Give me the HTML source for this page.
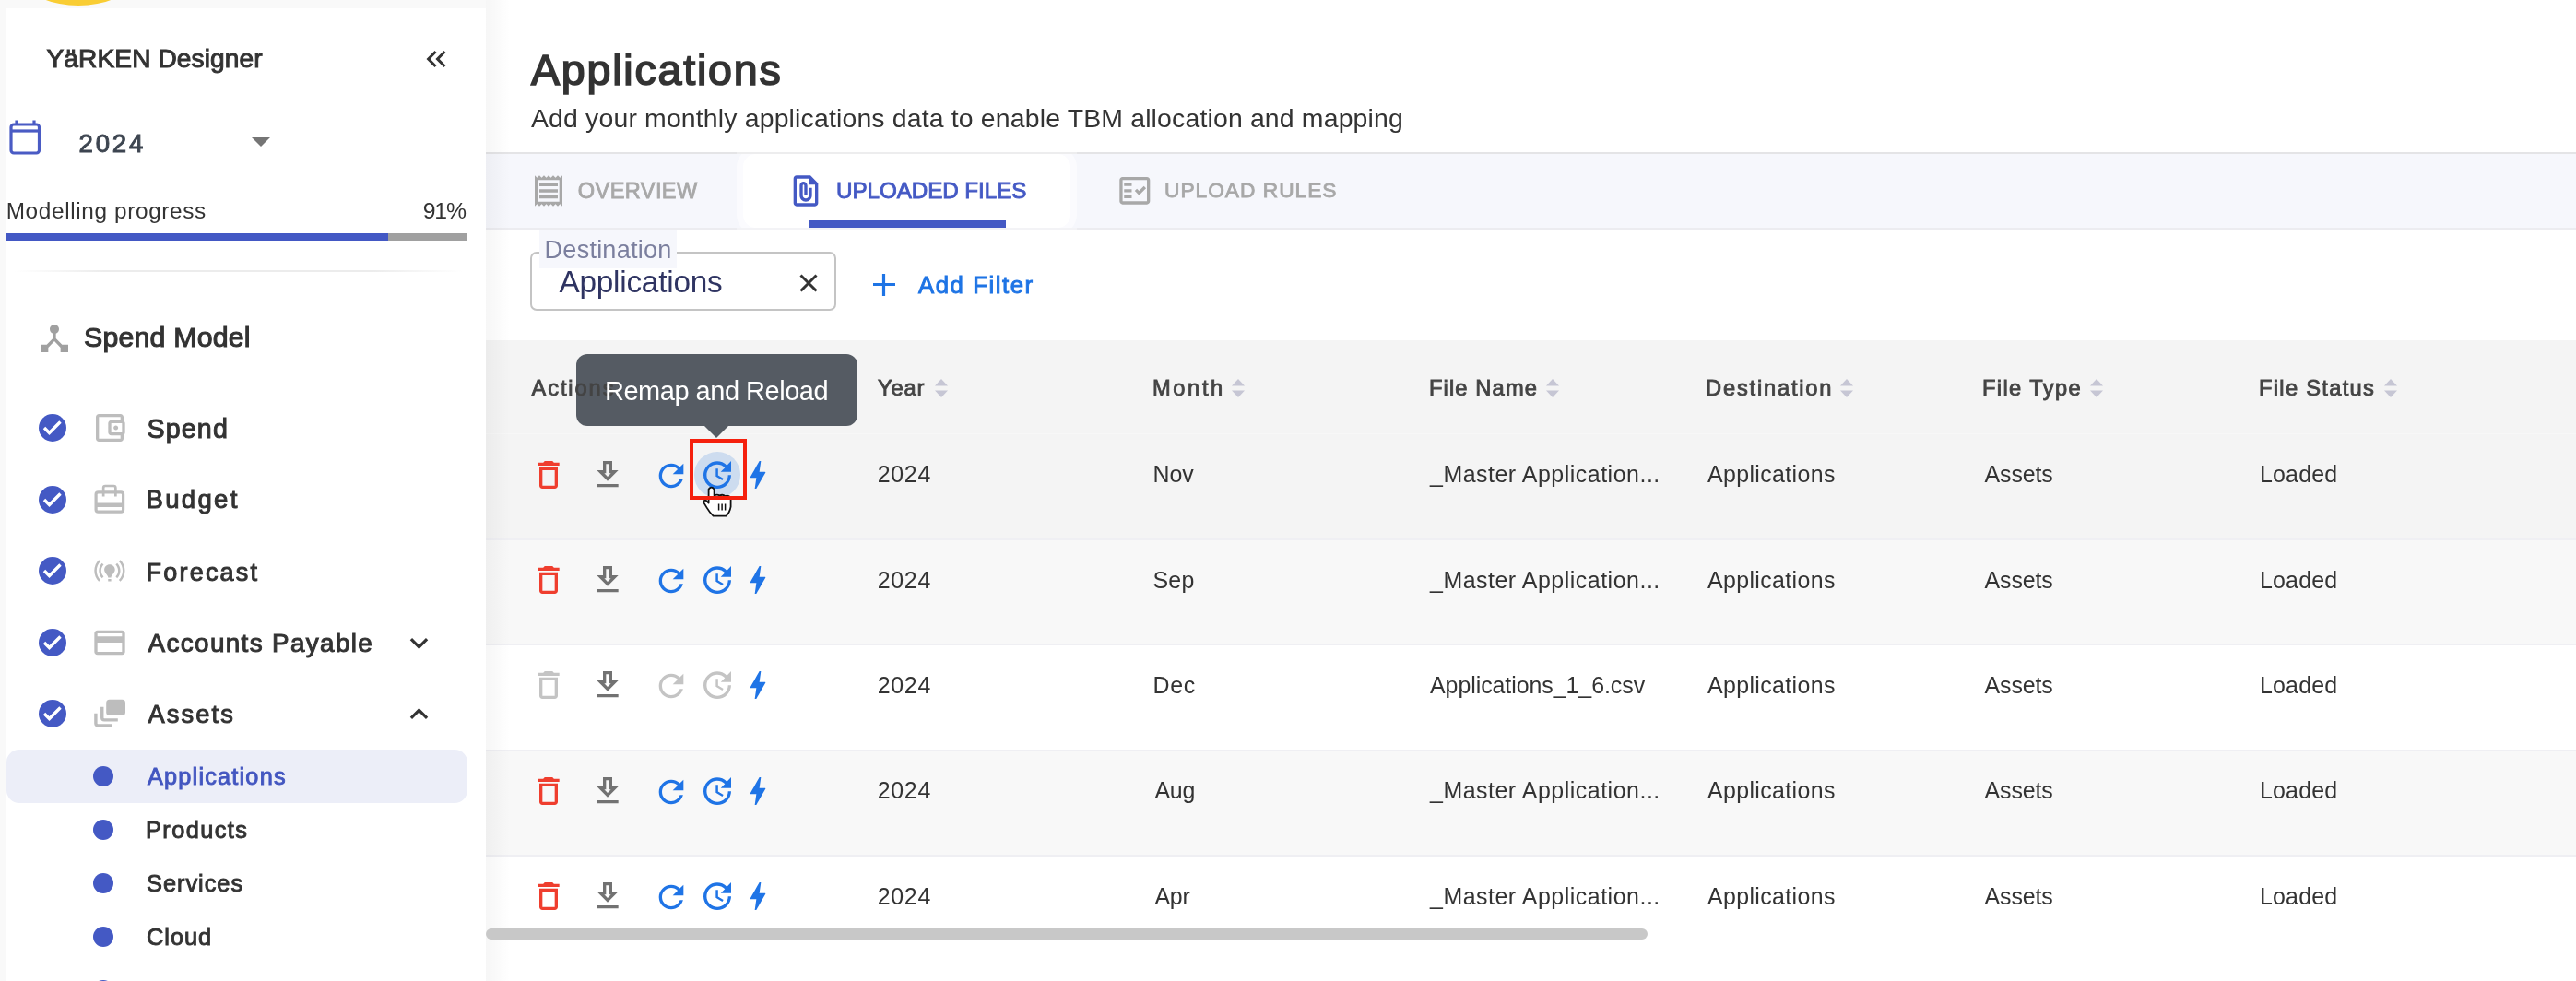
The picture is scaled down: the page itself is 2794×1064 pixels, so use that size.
<!DOCTYPE html>
<html><head><meta charset="utf-8"><title>Applications</title>
<style>
html,body{margin:0;padding:0;}
body{width:2794px;height:1064px;overflow:hidden;position:relative;background:#f9f9f9;font-family:"Liberation Sans",sans-serif;}
.t{position:absolute;white-space:nowrap;line-height:1;}
.b{position:absolute;}
</style></head><body><div id="root" style="position:absolute;left:0;top:0;width:2794px;height:1064px;will-change:transform">
<div class="b" style="left:-20px;top:-200px;width:210px;height:206px;border-radius:50%;background:#f9cd34"></div>
<div class="b" style="left:7px;top:9px;width:520px;height:1100px;background:#fff;"></div>
<div class="b" style="left:527px;top:0px;width:2267px;height:1064px;background:#fff;"></div>
<div class="t" style="left:50.50px;top:50.00px;font-size:28.1px;font-weight:400;color:#333;letter-spacing:0.107px;-webkit-text-stroke:1.01px #333;">YäRKEN Designer</div>
<svg class="b" style="left:455.30px;top:45.80px;" width="36.00" height="36.00" viewBox="0 0 24 24"><path d="M17.59 18L19 16.59 14.42 12 19 7.41 17.59 6l-6 6zM11 18l1.41-1.41L7.83 12l4.58-4.59L11 6l-6 6z" fill="#333" /></svg>
<svg class="b" style="left:9px;top:129px;" width="37" height="40" viewBox="0 0 37 40"><rect x="3" y="6" width="30.5" height="31" rx="3" fill="none" stroke="#4a5bc4" stroke-width="3.2"/><line x1="3" y1="13" x2="33.5" y2="13" stroke="#4a5bc4" stroke-width="3.2"/><line x1="9" y1="1.5" x2="9" y2="6" stroke="#4a5bc4" stroke-width="3.2"/><line x1="28" y1="1.5" x2="28" y2="6" stroke="#4a5bc4" stroke-width="3.2"/></svg>
<div class="t" style="left:85.60px;top:142.00px;font-size:27.55px;font-weight:400;color:#3d4550;letter-spacing:2.800px;-webkit-text-stroke:0.99px #3d4550;">2024</div>
<svg class="b" style="left:272px;top:148px;" width="22" height="12" viewBox="0 0 22 12"><path d="M1 1 L21 1 L11 11 Z" fill="#757575"/></svg>
<div class="t" style="left:6.70px;top:217.00px;font-size:24.35px;font-weight:400;color:#333;letter-spacing:0.641px;">Modelling progress</div>
<div class="t" style="left:458.80px;top:217.00px;font-size:24.78px;font-weight:400;color:#333;letter-spacing:-1.200px;">91%</div>
<div class="b" style="left:7px;top:253px;width:500px;height:8px;background:#a0a0a0;"></div>
<div class="b" style="left:7px;top:253px;width:414px;height:8px;background:#4358c4;"></div>
<div class="b" style="left:16px;top:293px;width:486px;height:2px;background:linear-gradient(90deg,rgba(235,235,235,0),#ececec 20%,#ececec 80%,rgba(235,235,235,0));"></div>
<svg class="b" style="left:39.00px;top:346.50px;" width="40.01" height="40.01" viewBox="0 0 24 24"><path d="M17 16l-4-4V8.82C14.16 8.4 15 7.3 15 6c0-1.66-1.34-3-3-3S9 4.34 9 6c0 1.3.84 2.4 2 2.82V12l-4 4H3v5h5v-3.05l4-4.2 4 4.2V21h5v-5h-4z" fill="#a0a0a0" /></svg>
<div class="t" style="left:91.00px;top:351.00px;font-size:30.3px;font-weight:400;color:#333;letter-spacing:0.200px;-webkit-text-stroke:1.09px #333;">Spend Model</div>
<svg class="b" style="left:42px;top:449px;" width="30" height="30" viewBox="0 0 30 30"><circle cx="15" cy="15" r="15" fill="#4459c4"/><path d="M6 15 L11.5 20.5 L23.5 8.5" fill="none" stroke="#fff" stroke-width="3.4"/></svg>
<div class="t" style="left:159.60px;top:451.00px;font-size:28.65px;font-weight:400;color:#333;letter-spacing:1.100px;-webkit-text-stroke:1.03px #333;">Spend</div>
<svg class="b" style="left:42px;top:527px;" width="30" height="30" viewBox="0 0 30 30"><circle cx="15" cy="15" r="15" fill="#4459c4"/><path d="M6 15 L11.5 20.5 L23.5 8.5" fill="none" stroke="#fff" stroke-width="3.4"/></svg>
<div class="t" style="left:158.60px;top:528.00px;font-size:27.55px;font-weight:400;color:#333;letter-spacing:2.280px;-webkit-text-stroke:0.99px #333;">Budget</div>
<svg class="b" style="left:42px;top:604px;" width="30" height="30" viewBox="0 0 30 30"><circle cx="15" cy="15" r="15" fill="#4459c4"/><path d="M6 15 L11.5 20.5 L23.5 8.5" fill="none" stroke="#fff" stroke-width="3.4"/></svg>
<div class="t" style="left:158.60px;top:608.00px;font-size:27.0px;font-weight:400;color:#333;letter-spacing:2.200px;-webkit-text-stroke:0.97px #333;">Forecast</div>
<svg class="b" style="left:42px;top:682px;" width="30" height="30" viewBox="0 0 30 30"><circle cx="15" cy="15" r="15" fill="#4459c4"/><path d="M6 15 L11.5 20.5 L23.5 8.5" fill="none" stroke="#fff" stroke-width="3.4"/></svg>
<div class="t" style="left:160.60px;top:684.00px;font-size:27.82px;font-weight:400;color:#333;letter-spacing:1.373px;-webkit-text-stroke:1.0px #333;">Accounts Payable</div>
<svg class="b" style="left:42px;top:759px;" width="30" height="30" viewBox="0 0 30 30"><circle cx="15" cy="15" r="15" fill="#4459c4"/><path d="M6 15 L11.5 20.5 L23.5 8.5" fill="none" stroke="#fff" stroke-width="3.4"/></svg>
<div class="t" style="left:160.60px;top:761.00px;font-size:27.27px;font-weight:400;color:#333;letter-spacing:2.080px;-webkit-text-stroke:0.98px #333;">Assets</div>
<svg class="b" style="left:99.00px;top:444.00px;" width="40.01" height="40.01" viewBox="0 0 24 24"><path d="M21 7.28V5c0-1.1-.9-2-2-2H5c-1.11 0-2 .9-2 2v14c0 1.1.89 2 2 2h14c1.1 0 2-.9 2-2v-2.28c.59-.35 1-.98 1-1.72V9c0-.74-.41-1.37-1-1.72zM20 9v6h-7V9h7zM5 19V5h14v2h-6c-1.1 0-2 .9-2 2v6c0 1.1.9 2 2 2h6v2H5zM16 13.5c.83 0 1.5-.67 1.5-1.5s-.67-1.5-1.5-1.5-1.5.67-1.5 1.5.67 1.5 1.5 1.5z" fill="#bdbdbd" /></svg>
<svg class="b" style="left:98px;top:520px;" width="42" height="42" viewBox="0 0 42 42"><rect x="6.1" y="13.8" width="29.5" height="21.4" rx="2.5" fill="none" stroke="#bdbdbd" stroke-width="3.2"/><path d="M14.15 18.6 V9 Q14.15 7 16.15 7 H25.35 Q27.35 7 27.35 9 V18.6" fill="none" stroke="#bdbdbd" stroke-width="2.7"/><rect x="6" y="25.5" width="29.5" height="4.5" fill="#bdbdbd"/></svg>
<svg class="b" style="left:99.00px;top:599.30px;" width="39.84" height="39.84" viewBox="0 0 24 24"><path d="M15.5 11.5c0 2-2.5 3.5-2.5 5h-2c0-1.5-2.5-3-2.5-5C8.5 9.57 10.07 8 12 8s3.5 1.57 3.5 3.5zm-2.5 6h-2V19h2v-1.5zm9-5.5c0-2.76-1.12-5.26-2.93-7.07l-1.06 1.06C19.550 7.53 20.5 9.66 20.5 12c0 2.34-.95 4.47-2.49 6.01l1.06 1.06C20.88 17.26 22 14.76 22 12zM3.5 12c0-2.34.95-4.47 2.49-6.01L4.93 4.93C3.12 6.74 2 9.24 2 12c0 2.76 1.12 5.26 2.93 7.07l1.06-1.06C4.45 16.47 3.5 14.34 3.5 12zm14 0c0 1.52-.62 2.89-1.61 3.89l1.06 1.06C18.22 15.68 19 13.93 19 12c0-1.93-.78-3.68-2.05-4.95l-1.06 1.06c.99 1 1.61 2.37 1.61 3.89zM7.05 16.95l1.06-1.06c-1-1-1.61-2.37-1.61-3.89 0-1.52.62-2.89 1.61-3.89L7.05 7.05C5.78 8.32 5 10.07 5 12c0 1.93.78 3.68 2.05 4.95z" fill="#bdbdbd" /></svg>
<svg class="b" style="left:99.30px;top:676.90px;" width="40.01" height="40.01" viewBox="0 0 24 24"><path d="M20 4H4c-1.11 0-1.99.89-1.99 2L2 18c0 1.11.89 2 2 2h16c1.11 0 2-.89 2-2V6c0-1.11-.89-2-2-2zm0 14H4v-6h16v6zm0-10H4V6h16v2z" fill="#bdbdbd" /></svg>
<svg class="b" style="left:100px;top:757px;" width="38" height="34" viewBox="0 0 38 34"><rect x="15.2" y="1.7" width="20.8" height="17.2" rx="3.5" fill="#bdbdbd"/><path d="M10.75 9.7 V21.5 Q10.75 23.85 13.1 23.85 H27.8" fill="none" stroke="#bdbdbd" stroke-width="3.4"/><path d="M3.9 16.8 V27.6 Q3.9 29.95 6.25 29.95 H21" fill="none" stroke="#bdbdbd" stroke-width="3.4"/></svg>
<svg class="b" style="left:435.25px;top:677.70px;" width="39.00" height="39.00" viewBox="0 0 24 24"><path d="M16.59 8.59L12 13.17 7.41 8.59 6 10l6 6 6-6z" fill="#333" /></svg>
<svg class="b" style="left:435.25px;top:754.60px;" width="39.00" height="39.00" viewBox="0 0 24 24"><path d="M12 8l-6 6 1.41 1.41L12 10.83l4.59 4.58L18 14z" fill="#333" /></svg>
<div class="b" style="left:7px;top:813px;width:500px;height:58px;border-radius:14px;background:#eceef8"></div>
<div class="b" style="left:101px;top:831px;width:22px;height:22px;border-radius:50%;background:#4459c4"></div>
<div class="t" style="left:160.00px;top:830.00px;font-size:25.34px;font-weight:400;color:#4356c0;letter-spacing:1.182px;-webkit-text-stroke:0.91px #4356c0;">Applications</div>
<div class="b" style="left:101px;top:889px;width:22px;height:22px;border-radius:50%;background:#4459c4"></div>
<div class="t" style="left:158.00px;top:888.00px;font-size:25.34px;font-weight:400;color:#333;letter-spacing:1.429px;-webkit-text-stroke:0.91px #333;">Products</div>
<div class="b" style="left:101px;top:947px;width:22px;height:22px;border-radius:50%;background:#4459c4"></div>
<div class="t" style="left:159.00px;top:946.00px;font-size:25.34px;font-weight:400;color:#333;letter-spacing:1.000px;-webkit-text-stroke:0.91px #333;">Services</div>
<div class="b" style="left:101px;top:1005px;width:22px;height:22px;border-radius:50%;background:#4459c4"></div>
<div class="t" style="left:159.00px;top:1004.00px;font-size:25.34px;font-weight:400;color:#333;letter-spacing:1.000px;-webkit-text-stroke:0.91px #333;">Cloud</div>
<div class="b" style="left:101px;top:1063px;width:22px;height:22px;border-radius:50%;background:#4459c4"></div>
<div class="t" style="left:576.00px;top:53.00px;font-size:46.56px;font-weight:400;color:#333;letter-spacing:1.791px;-webkit-text-stroke:1.68px #333;">Applications</div>
<div class="t" style="left:576.00px;top:114.00px;font-size:28.41px;font-weight:400;color:#333;letter-spacing:0.164px;">Add your monthly applications data to enable TBM allocation and mapping</div>
<div class="b" style="left:527px;top:165px;width:2267px;height:83px;background:#f6f7fc;"></div>
<div class="b" style="left:527px;top:165px;width:2267px;height:2px;background:#e4e4e6;"></div>
<div class="b" style="left:527px;top:247px;width:2267px;height:2px;background:#ececf0;"></div>
<div class="b" style="left:806px;top:167px;width:355px;height:80px;border-radius:14px;background:#fff;box-shadow:0 0 0 7px rgba(255,255,255,0.55)"></div>
<div class="b" style="left:799px;top:165px;width:369px;height:2px;background:#ededee;"></div>
<div class="b" style="left:799px;top:247px;width:369px;height:2px;background:#f3f3f6;"></div>
<div class="b" style="left:877px;top:239px;width:214px;height:8px;background:#4459c4;"></div>
<svg class="b" style="left:575.00px;top:187.20px;" width="40.01" height="40.01" viewBox="0 0 24 24"><path d="M19.5 3.5L18 2l-1.5 1.5L15 2l-1.5 1.5L12 2l-1.5 1.5L9 2 7.5 3.5 6 2 4.5 3.5 3 2v20l1.5-1.5L6 22l1.5-1.5L9 22l1.5-1.5L12 22l1.5-1.5L15 22l1.5-1.5L18 22l1.5-1.5L21 22V2l-1.5 1.5zM19 19.09H5V4.91h14v14.18zM6 15h12v2H6zm0-4h12v2H6zm0-4h12v2H6z" fill="#a8a8a8" /></svg>
<div class="t" style="left:626.80px;top:196.00px;font-size:23.55px;font-weight:400;color:#a8a8a8;letter-spacing:0.414px;-webkit-text-stroke:0.85px #a8a8a8;">OVERVIEW</div>
<svg class="b" style="left:854.00px;top:186.70px;" width="40.01" height="40.01" viewBox="0 0 24 24"><path d="M15 2H6c-1.1 0-2 .9-2 2v16c0 1.1.9 2 2 2h12c1.1 0 2-.9 2-2V7l-5-5zM6 20V4h8v4h4v12H6zm10-10v5c0 2.21-1.79 4-4 4s-4-1.79-4-4V8.5c0-1.47 1.26-2.64 2.76-2.49 1.3.13 2.240 1.32 2.24 2.63V15h-2V8.5c0-.28-.22-.5-.5-.5s-.5.22-.5.5V15c0 1.1.9 2 2 2s2-.9 2-2v-5h2z" fill="#4459c4" /></svg>
<div class="t" style="left:907.00px;top:195.00px;font-size:24.24px;font-weight:400;color:#4459c4;letter-spacing:-0.077px;-webkit-text-stroke:0.87px #4459c4;">UPLOADED FILES</div>
<svg class="b" style="left:1210.70px;top:187.00px;" width="39.60" height="39.60" viewBox="0 0 24 24"><path d="M20 3H4c-1.1 0-2 .9-2 2v14c0 1.1.9 2 2 2h16c1.1 0 2-.9 2-2V5c0-1.1-.9-2-2-2zm0 16H4V5h16v14zM19.41 10.42l-1.42-1.42-3.17 3.17-1.41-1.42L12 12.16 14.83 15zM5 7h5v2H5zm0 4h5v2H5zm0 4h5v2H5z" fill="#a8a8a8" /></svg>
<div class="t" style="left:1263.00px;top:195.00px;font-size:22.73px;font-weight:400;color:#a8a8a8;letter-spacing:1.000px;-webkit-text-stroke:0.82px #a8a8a8;">UPLOAD RULES</div>
<div class="b" style="left:575px;top:273px;width:328px;height:60px;border:2px solid #c4c4c4;border-radius:7px;background:#fff"></div>
<div class="b" style="left:585px;top:249px;width:149px;height:42px;background:#f6f7fc;"></div>
<div class="t" style="left:590.60px;top:257.00px;font-size:27.1px;font-weight:400;color:#7b7f9e;letter-spacing:0.210px;">Destination</div>
<div class="t" style="left:606.40px;top:289.00px;font-size:33.33px;font-weight:400;color:#2f3462;letter-spacing:-0.218px;">Applications</div>
<svg class="b" style="left:866px;top:296px;" width="22" height="22" viewBox="0 0 22 22"><path d="M2.5 2.5 L19.5 19.5 M19.5 2.5 L2.5 19.5" stroke="#333" stroke-width="3"/></svg>
<svg class="b" style="left:946px;top:296px;" width="26" height="26" viewBox="0 0 26 26"><path d="M12.5 1 V25 M1 12.5 H25" stroke="#1e74e5" stroke-width="3.2"/></svg>
<div class="t" style="left:996.00px;top:297.00px;font-size:25.76px;font-weight:400;color:#1e74e5;letter-spacing:1.556px;-webkit-text-stroke:0.93px #1e74e5;">Add Filter</div>
<div class="b" style="left:527px;top:369px;width:2267px;height:101px;background:#f4f4f4;"></div>
<div class="b" style="left:527px;top:470px;width:2267px;height:114px;background:#f4f4f4;"></div>
<div class="b" style="left:527px;top:470px;width:2267px;height:1px;background:#f7f7f7;"></div>
<div class="b" style="left:527px;top:584px;width:2267px;height:114px;background:#f8f8f8;"></div>
<div class="b" style="left:527px;top:584px;width:2267px;height:2px;background:#efeff3;"></div>
<div class="b" style="left:527px;top:698px;width:2267px;height:115px;background:#fff;"></div>
<div class="b" style="left:527px;top:698px;width:2267px;height:2px;background:#efeff3;"></div>
<div class="b" style="left:527px;top:813px;width:2267px;height:114px;background:#f8f8f8;"></div>
<div class="b" style="left:527px;top:813px;width:2267px;height:2px;background:#efeff3;"></div>
<div class="b" style="left:527px;top:927px;width:2267px;height:137px;background:#fff;"></div>
<div class="b" style="left:527px;top:927px;width:2267px;height:2px;background:#efeff3;"></div>
<div class="t" style="left:952.00px;top:410.00px;font-size:23.69px;font-weight:400;color:#444;letter-spacing:0.833px;-webkit-text-stroke:0.85px #444;">Year</div>
<svg class="b" style="left:1012.5px;top:410px;" width="16" height="22" viewBox="0 0 16 22"><path d="M8 1 L15 8.5 H1 Z M8 21 L15 13.5 H1 Z" fill="#c6c6d4"/></svg>
<div class="t" style="left:1250.00px;top:410.00px;font-size:23.69px;font-weight:400;color:#444;letter-spacing:2.600px;-webkit-text-stroke:0.85px #444;">Month</div>
<svg class="b" style="left:1335.4px;top:410px;" width="16" height="22" viewBox="0 0 16 22"><path d="M8 1 L15 8.5 H1 Z M8 21 L15 13.5 H1 Z" fill="#c6c6d4"/></svg>
<div class="t" style="left:1550.00px;top:410.00px;font-size:23.69px;font-weight:400;color:#444;letter-spacing:1.125px;-webkit-text-stroke:0.85px #444;">File Name</div>
<svg class="b" style="left:1676px;top:410px;" width="16" height="22" viewBox="0 0 16 22"><path d="M8 1 L15 8.5 H1 Z M8 21 L15 13.5 H1 Z" fill="#c6c6d4"/></svg>
<div class="t" style="left:1850.00px;top:410.00px;font-size:23.69px;font-weight:400;color:#444;letter-spacing:1.800px;-webkit-text-stroke:0.85px #444;">Destination</div>
<svg class="b" style="left:1995px;top:410px;" width="16" height="22" viewBox="0 0 16 22"><path d="M8 1 L15 8.5 H1 Z M8 21 L15 13.5 H1 Z" fill="#c6c6d4"/></svg>
<div class="t" style="left:2150.00px;top:410.00px;font-size:23.69px;font-weight:400;color:#444;letter-spacing:1.375px;-webkit-text-stroke:0.85px #444;">File Type</div>
<svg class="b" style="left:2266px;top:410px;" width="16" height="22" viewBox="0 0 16 22"><path d="M8 1 L15 8.5 H1 Z M8 21 L15 13.5 H1 Z" fill="#c6c6d4"/></svg>
<div class="t" style="left:2450.00px;top:410.00px;font-size:23.69px;font-weight:400;color:#444;letter-spacing:1.300px;-webkit-text-stroke:0.85px #444;">File Status</div>
<svg class="b" style="left:2585px;top:410px;" width="16" height="22" viewBox="0 0 16 22"><path d="M8 1 L15 8.5 H1 Z M8 21 L15 13.5 H1 Z" fill="#c6c6d4"/></svg>
<div class="b" style="left:753px;top:490px;width:49.5px;height:49.5px;border-radius:50%;background:#cddcef"></div>
<svg class="b" style="left:574.70px;top:494.80px;" width="40.01" height="40.01" viewBox="0 0 24 24"><path d="M6 19c0 1.1.9 2 2 2h8c1.1 0 2-.9 2-2V7H6v12zM8 9h8v10H8V9zm7.5-5l-1-1h-5l-1 1H5v2h14V4h-3.5z" fill="#ef3e2e" /></svg>
<svg class="b" style="left:639.10px;top:494.80px;" width="40.01" height="40.01" viewBox="0 0 24 24"><path d="M19 9h-4V3H9v6H5l7 7 7-7zM11 11V5h2v6h1.17L12 13.17 9.83 11H11zm-6 7h14v2H5z" fill="#727272" /></svg>
<svg class="b" style="left:707.60px;top:495.70px;" width="40.01" height="40.01" viewBox="0 0 24 24"><path d="M17.65 6.35C16.2 4.9 14.21 4 12 4c-4.42 0-7.99 3.58-7.99 8s3.57 8 7.99 8c3.73 0 6.84-2.55 7.73-6h-2.08c-.82 2.33-3.04 4-5.650 4-3.31 0-6-2.69-6-6s2.69-6 6-6c1.66 0 3.14.69 4.22 1.78L13 11h7V4l-2.35 2.35z" fill="#1f74e6" /></svg>
<svg class="b" style="left:758.00px;top:494.80px;" width="40.01" height="40.01" viewBox="0 0 24 24"><path d="M21 10.12h-6.78l2.74-2.82c-2.73-2.7-7.15-2.8-9.88-.1-2.73 2.71-2.73 7.08 0 9.790s7.15 2.71 9.88 0C18.32 15.65 19 14.08 19 12.1h2c0 1.98-.88 4.55-2.64 6.29-3.51 3.48-9.21 3.48-12.72 0-3.5-3.47-3.53-9.11-.02-12.58s9.14-3.47 12.65 0L21 3v7.12zM12.5 8v4.25l3.5 2.08-.72 1.21L11 13V8h1.5z" fill="#1f74e6" /></svg>
<svg class="b" style="left:802.30px;top:494.80px;" width="40.01" height="40.01" viewBox="0 0 24 24"><path d="M11 21h-1l1-7H7.5c-.58 0-.57-.32-.38-.66.19-.34.05-.08.07-.12C8.48 10.94 10.42 7.54 13 3h1l-1 7h3.5c.49 0 .56.33.47.510l-.07.15C12.96 17.55 11 21 11 21z" fill="#1f74e6" /></svg>
<div class="t" style="left:951.75px;top:502.00px;font-size:24.93px;font-weight:400;color:#333;letter-spacing:0.683px;">2024</div>
<div class="t" style="left:1250.50px;top:502.00px;font-size:24.93px;font-weight:400;color:#333;letter-spacing:0.000px;">Nov</div>
<div class="t" style="left:1551.00px;top:502.00px;font-size:24.93px;font-weight:400;color:#333;letter-spacing:0.524px;">_Master Application...</div>
<div class="t" style="left:1852.00px;top:502.00px;font-size:24.93px;font-weight:400;color:#333;letter-spacing:0.364px;">Applications</div>
<div class="t" style="left:2152.50px;top:502.00px;font-size:24.93px;font-weight:400;color:#333;letter-spacing:-0.100px;">Assets</div>
<div class="t" style="left:2451.00px;top:502.00px;font-size:24.93px;font-weight:400;color:#333;letter-spacing:0.200px;">Loaded</div>
<svg class="b" style="left:574.70px;top:609.10px;" width="40.01" height="40.01" viewBox="0 0 24 24"><path d="M6 19c0 1.1.9 2 2 2h8c1.1 0 2-.9 2-2V7H6v12zM8 9h8v10H8V9zm7.5-5l-1-1h-5l-1 1H5v2h14V4h-3.5z" fill="#ef3e2e" /></svg>
<svg class="b" style="left:639.10px;top:609.10px;" width="40.01" height="40.01" viewBox="0 0 24 24"><path d="M19 9h-4V3H9v6H5l7 7 7-7zM11 11V5h2v6h1.17L12 13.17 9.83 11H11zm-6 7h14v2H5z" fill="#727272" /></svg>
<svg class="b" style="left:707.60px;top:610.00px;" width="40.01" height="40.01" viewBox="0 0 24 24"><path d="M17.65 6.35C16.2 4.9 14.21 4 12 4c-4.42 0-7.99 3.58-7.99 8s3.57 8 7.99 8c3.73 0 6.84-2.55 7.73-6h-2.08c-.82 2.33-3.04 4-5.650 4-3.31 0-6-2.69-6-6s2.69-6 6-6c1.66 0 3.14.69 4.22 1.78L13 11h7V4l-2.35 2.35z" fill="#1f74e6" /></svg>
<svg class="b" style="left:758.00px;top:609.10px;" width="40.01" height="40.01" viewBox="0 0 24 24"><path d="M21 10.12h-6.78l2.74-2.82c-2.73-2.7-7.15-2.8-9.88-.1-2.73 2.71-2.73 7.08 0 9.790s7.15 2.71 9.88 0C18.32 15.65 19 14.08 19 12.1h2c0 1.98-.88 4.55-2.64 6.29-3.51 3.48-9.21 3.48-12.72 0-3.5-3.47-3.53-9.11-.02-12.58s9.14-3.47 12.65 0L21 3v7.12zM12.5 8v4.25l3.5 2.08-.72 1.21L11 13V8h1.5z" fill="#1f74e6" /></svg>
<svg class="b" style="left:802.30px;top:609.10px;" width="40.01" height="40.01" viewBox="0 0 24 24"><path d="M11 21h-1l1-7H7.5c-.58 0-.57-.32-.38-.66.19-.34.05-.08.07-.12C8.48 10.94 10.42 7.54 13 3h1l-1 7h3.5c.49 0 .56.33.47.510l-.07.15C12.96 17.55 11 21 11 21z" fill="#1f74e6" /></svg>
<div class="t" style="left:951.75px;top:617.00px;font-size:24.93px;font-weight:400;color:#333;letter-spacing:0.683px;">2024</div>
<div class="t" style="left:1250.50px;top:617.00px;font-size:24.93px;font-weight:400;color:#333;letter-spacing:0.250px;">Sep</div>
<div class="t" style="left:1551.00px;top:617.00px;font-size:24.93px;font-weight:400;color:#333;letter-spacing:0.524px;">_Master Application...</div>
<div class="t" style="left:1852.00px;top:617.00px;font-size:24.93px;font-weight:400;color:#333;letter-spacing:0.364px;">Applications</div>
<div class="t" style="left:2152.50px;top:617.00px;font-size:24.93px;font-weight:400;color:#333;letter-spacing:-0.100px;">Assets</div>
<div class="t" style="left:2451.00px;top:617.00px;font-size:24.93px;font-weight:400;color:#333;letter-spacing:0.200px;">Loaded</div>
<svg class="b" style="left:574.70px;top:723.40px;" width="40.01" height="40.01" viewBox="0 0 24 24"><path d="M6 19c0 1.1.9 2 2 2h8c1.1 0 2-.9 2-2V7H6v12zM8 9h8v10H8V9zm7.5-5l-1-1h-5l-1 1H5v2h14V4h-3.5z" fill="#c4c4c4" /></svg>
<svg class="b" style="left:639.10px;top:723.40px;" width="40.01" height="40.01" viewBox="0 0 24 24"><path d="M19 9h-4V3H9v6H5l7 7 7-7zM11 11V5h2v6h1.17L12 13.17 9.83 11H11zm-6 7h14v2H5z" fill="#727272" /></svg>
<svg class="b" style="left:707.60px;top:724.30px;" width="40.01" height="40.01" viewBox="0 0 24 24"><path d="M17.65 6.35C16.2 4.9 14.21 4 12 4c-4.42 0-7.99 3.58-7.99 8s3.57 8 7.99 8c3.73 0 6.84-2.55 7.73-6h-2.08c-.82 2.33-3.04 4-5.650 4-3.31 0-6-2.69-6-6s2.69-6 6-6c1.66 0 3.14.69 4.22 1.78L13 11h7V4l-2.35 2.35z" fill="#c4c4c4" /></svg>
<svg class="b" style="left:758.00px;top:723.40px;" width="40.01" height="40.01" viewBox="0 0 24 24"><path d="M21 10.12h-6.78l2.74-2.82c-2.73-2.7-7.15-2.8-9.88-.1-2.73 2.71-2.73 7.08 0 9.790s7.15 2.71 9.88 0C18.32 15.65 19 14.08 19 12.1h2c0 1.98-.88 4.55-2.64 6.29-3.51 3.48-9.21 3.48-12.72 0-3.5-3.47-3.53-9.11-.02-12.58s9.14-3.47 12.65 0L21 3v7.12zM12.5 8v4.25l3.5 2.08-.72 1.21L11 13V8h1.5z" fill="#c4c4c4" /></svg>
<svg class="b" style="left:802.30px;top:723.40px;" width="40.01" height="40.01" viewBox="0 0 24 24"><path d="M11 21h-1l1-7H7.5c-.58 0-.57-.32-.38-.66.19-.34.05-.08.07-.12C8.48 10.94 10.42 7.54 13 3h1l-1 7h3.5c.49 0 .56.33.47.510l-.07.15C12.96 17.55 11 21 11 21z" fill="#1f74e6" /></svg>
<div class="t" style="left:951.75px;top:731.00px;font-size:24.93px;font-weight:400;color:#333;letter-spacing:0.683px;">2024</div>
<div class="t" style="left:1250.50px;top:731.00px;font-size:24.93px;font-weight:400;color:#333;letter-spacing:0.650px;">Dec</div>
<div class="t" style="left:1551.00px;top:731.00px;font-size:24.93px;font-weight:400;color:#333;letter-spacing:-0.053px;">Applications_1_6.csv</div>
<div class="t" style="left:1852.00px;top:731.00px;font-size:24.93px;font-weight:400;color:#333;letter-spacing:0.364px;">Applications</div>
<div class="t" style="left:2152.50px;top:731.00px;font-size:24.93px;font-weight:400;color:#333;letter-spacing:-0.100px;">Assets</div>
<div class="t" style="left:2451.00px;top:731.00px;font-size:24.93px;font-weight:400;color:#333;letter-spacing:0.200px;">Loaded</div>
<svg class="b" style="left:574.70px;top:837.70px;" width="40.01" height="40.01" viewBox="0 0 24 24"><path d="M6 19c0 1.1.9 2 2 2h8c1.1 0 2-.9 2-2V7H6v12zM8 9h8v10H8V9zm7.5-5l-1-1h-5l-1 1H5v2h14V4h-3.5z" fill="#ef3e2e" /></svg>
<svg class="b" style="left:639.10px;top:837.70px;" width="40.01" height="40.01" viewBox="0 0 24 24"><path d="M19 9h-4V3H9v6H5l7 7 7-7zM11 11V5h2v6h1.17L12 13.17 9.83 11H11zm-6 7h14v2H5z" fill="#727272" /></svg>
<svg class="b" style="left:707.60px;top:838.60px;" width="40.01" height="40.01" viewBox="0 0 24 24"><path d="M17.65 6.35C16.2 4.9 14.21 4 12 4c-4.42 0-7.99 3.58-7.99 8s3.57 8 7.99 8c3.73 0 6.84-2.55 7.73-6h-2.08c-.82 2.33-3.04 4-5.650 4-3.31 0-6-2.69-6-6s2.69-6 6-6c1.66 0 3.14.69 4.22 1.78L13 11h7V4l-2.35 2.35z" fill="#1f74e6" /></svg>
<svg class="b" style="left:758.00px;top:837.70px;" width="40.01" height="40.01" viewBox="0 0 24 24"><path d="M21 10.12h-6.78l2.74-2.82c-2.73-2.7-7.15-2.8-9.88-.1-2.73 2.71-2.73 7.08 0 9.790s7.15 2.71 9.88 0C18.32 15.65 19 14.08 19 12.1h2c0 1.98-.88 4.55-2.64 6.29-3.51 3.48-9.21 3.48-12.72 0-3.5-3.47-3.53-9.11-.02-12.58s9.14-3.47 12.65 0L21 3v7.12zM12.5 8v4.25l3.5 2.08-.72 1.21L11 13V8h1.5z" fill="#1f74e6" /></svg>
<svg class="b" style="left:802.30px;top:837.70px;" width="40.01" height="40.01" viewBox="0 0 24 24"><path d="M11 21h-1l1-7H7.5c-.58 0-.57-.32-.38-.66.19-.34.05-.08.07-.12C8.48 10.94 10.42 7.54 13 3h1l-1 7h3.5c.49 0 .56.33.47.510l-.07.15C12.96 17.55 11 21 11 21z" fill="#1f74e6" /></svg>
<div class="t" style="left:951.75px;top:845.00px;font-size:24.93px;font-weight:400;color:#333;letter-spacing:0.683px;">2024</div>
<div class="t" style="left:1252.50px;top:845.00px;font-size:24.93px;font-weight:400;color:#333;letter-spacing:-0.250px;">Aug</div>
<div class="t" style="left:1551.00px;top:845.00px;font-size:24.93px;font-weight:400;color:#333;letter-spacing:0.524px;">_Master Application...</div>
<div class="t" style="left:1852.00px;top:845.00px;font-size:24.93px;font-weight:400;color:#333;letter-spacing:0.364px;">Applications</div>
<div class="t" style="left:2152.50px;top:845.00px;font-size:24.93px;font-weight:400;color:#333;letter-spacing:-0.100px;">Assets</div>
<div class="t" style="left:2451.00px;top:845.00px;font-size:24.93px;font-weight:400;color:#333;letter-spacing:0.200px;">Loaded</div>
<svg class="b" style="left:574.70px;top:952.00px;" width="40.01" height="40.01" viewBox="0 0 24 24"><path d="M6 19c0 1.1.9 2 2 2h8c1.1 0 2-.9 2-2V7H6v12zM8 9h8v10H8V9zm7.5-5l-1-1h-5l-1 1H5v2h14V4h-3.5z" fill="#ef3e2e" /></svg>
<svg class="b" style="left:639.10px;top:952.00px;" width="40.01" height="40.01" viewBox="0 0 24 24"><path d="M19 9h-4V3H9v6H5l7 7 7-7zM11 11V5h2v6h1.17L12 13.17 9.83 11H11zm-6 7h14v2H5z" fill="#727272" /></svg>
<svg class="b" style="left:707.60px;top:952.90px;" width="40.01" height="40.01" viewBox="0 0 24 24"><path d="M17.65 6.35C16.2 4.9 14.21 4 12 4c-4.42 0-7.99 3.58-7.99 8s3.57 8 7.99 8c3.73 0 6.84-2.55 7.73-6h-2.08c-.82 2.33-3.04 4-5.650 4-3.31 0-6-2.69-6-6s2.69-6 6-6c1.66 0 3.14.69 4.22 1.78L13 11h7V4l-2.35 2.35z" fill="#1f74e6" /></svg>
<svg class="b" style="left:758.00px;top:952.00px;" width="40.01" height="40.01" viewBox="0 0 24 24"><path d="M21 10.12h-6.78l2.74-2.82c-2.73-2.7-7.15-2.8-9.88-.1-2.73 2.71-2.73 7.08 0 9.790s7.15 2.71 9.88 0C18.32 15.65 19 14.08 19 12.1h2c0 1.98-.88 4.55-2.64 6.29-3.51 3.48-9.21 3.48-12.72 0-3.5-3.47-3.53-9.11-.02-12.58s9.14-3.47 12.65 0L21 3v7.12zM12.5 8v4.25l3.5 2.08-.72 1.21L11 13V8h1.5z" fill="#1f74e6" /></svg>
<svg class="b" style="left:802.30px;top:952.00px;" width="40.01" height="40.01" viewBox="0 0 24 24"><path d="M11 21h-1l1-7H7.5c-.58 0-.57-.32-.38-.66.19-.34.05-.08.07-.12C8.48 10.94 10.42 7.54 13 3h1l-1 7h3.5c.49 0 .56.33.47.510l-.07.15C12.96 17.55 11 21 11 21z" fill="#1f74e6" /></svg>
<div class="t" style="left:951.75px;top:960.00px;font-size:24.93px;font-weight:400;color:#333;letter-spacing:0.683px;">2024</div>
<div class="t" style="left:1252.50px;top:960.00px;font-size:24.93px;font-weight:400;color:#333;letter-spacing:-0.250px;">Apr</div>
<div class="t" style="left:1551.00px;top:960.00px;font-size:24.93px;font-weight:400;color:#333;letter-spacing:0.524px;">_Master Application...</div>
<div class="t" style="left:1852.00px;top:960.00px;font-size:24.93px;font-weight:400;color:#333;letter-spacing:0.364px;">Applications</div>
<div class="t" style="left:2152.50px;top:960.00px;font-size:24.93px;font-weight:400;color:#333;letter-spacing:-0.100px;">Assets</div>
<div class="t" style="left:2451.00px;top:960.00px;font-size:24.93px;font-weight:400;color:#333;letter-spacing:0.200px;">Loaded</div>
<div class="b" style="left:527px;top:0px;width:26px;height:1064px;background:linear-gradient(90deg,rgba(0,0,0,0.035),rgba(0,0,0,0));"></div>
<div class="b" style="left:527px;top:1007px;width:1260px;height:12px;border-radius:6px;background:#c8c8c8"></div>
<div class="b" style="left:625px;top:384px;width:305px;height:78px;border-radius:12px;background:#555b63"></div>
<svg class="b" style="left:763px;top:461px;" width="28" height="15" viewBox="0 0 28 15"><path d="M0 0 H28 L14 14 Z" fill="#555b63"/></svg>
<div class="t" style="left:576.50px;top:410.00px;font-size:23.69px;font-weight:400;color:#444;letter-spacing:1.883px;-webkit-text-stroke:0.85px #444;">Actions</div>
<div class="t" style="left:656.00px;top:410.00px;font-size:28.99px;font-weight:400;color:#fff;letter-spacing:-0.480px;">Remap and Reload</div>
<svg class="b" style="left:760px;top:525px;" width="36" height="38" viewBox="0 0 36 38"><path d="M8.6 5.6 Q11.6 1.6 14.6 5.6 L14.6 12.6 Q17.6 10.6 20.6 12.6 Q23.6 10.6 26.6 13.1 Q29.6 11.6 32.6 14.6 L32.6 24.6 Q31.6 30.6 27.6 34.6 H13.6 Q9.6 30.6 6.6 25.6 L3.6 20.6 Q2.6 17.6 5.6 17.6 L8.6 20.6 Z" fill="#fff" stroke="#111" stroke-width="1.8" stroke-linejoin="round"/><path d="M19.6 21.6 V28.6 M23.1 21.6 V28.6 M26.6 21.6 V28.6" stroke="#111" stroke-width="1.5"/></svg>
<div class="b" style="left:748.2px;top:476.1px;width:53.9px;height:57.6px;border:4px solid #f5200d"></div>
</div></body></html>
